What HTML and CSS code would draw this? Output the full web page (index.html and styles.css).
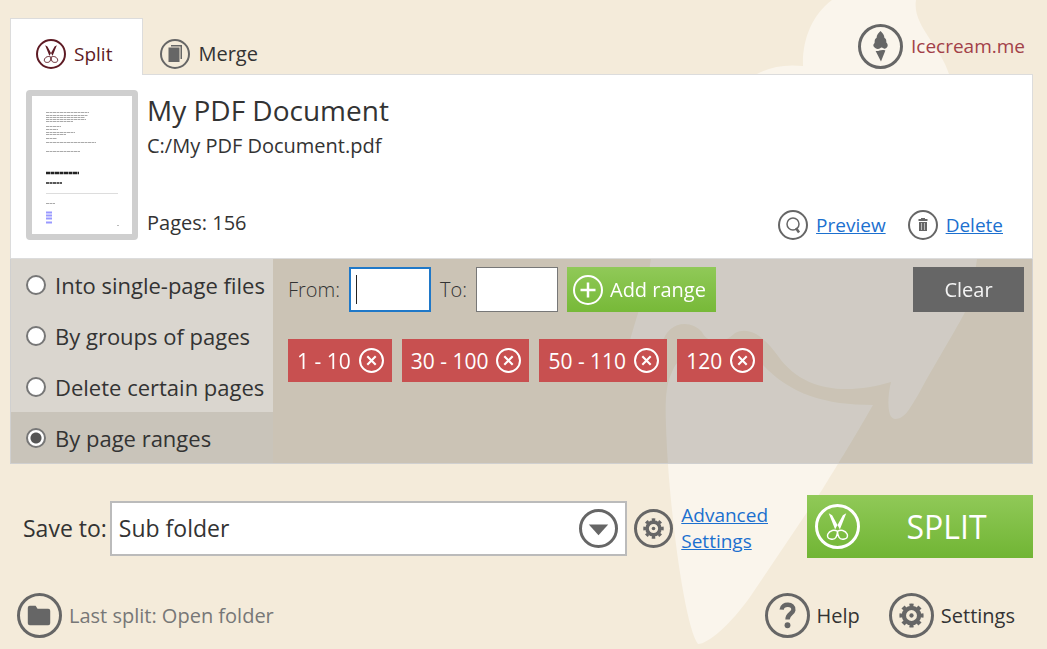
FILE: index.html
```html
<!DOCTYPE html>
<html lang="en">
<head>
    <meta charset="UTF-8">
    <meta name="viewport" content="width=device-width, initial-scale=1.0">
    <title>PDF Split &amp; Merge</title>
    <link rel="stylesheet" href="styles.css">
</head>
<body>
    <!-- shared icons -->
    <svg class="sprite" aria-hidden="true">
        <symbol id="scissors" viewBox="0 0 40 40">
            <path d="M11 6.500 L14.500 8.500 L22.500 23 L20 27 L17.800 23.500 Z M29 6.500 L25.500 8.500 L17.500 23 L20 27 L22.200 23.500 Z" fill="currentColor"/>
            <path d="M20 25 C17 23 12 23.500 10 28 C8 34 17 34 18.500 31 C19.500 29 20 27 20 25 C23 23 28 23.500 30 28 C32 34 23 34 21.500 31 C20.500 29 20 27 20 25 Z" fill="none" stroke="currentColor" stroke-width="1.500"/>
        </symbol>
        <symbol id="gear" viewBox="0 0 40 40">
            <circle cx="20" cy="20" r="7.800" fill="none" stroke="currentColor" stroke-width="4.400"/>
            <circle cx="20" cy="20" r="10.800" fill="none" stroke="currentColor" stroke-width="3.200" pathLength="16" stroke-dasharray="1 1" stroke-dashoffset="0.500"/>
            <circle cx="20" cy="20" r="2.200" fill="currentColor"/>
        </symbol>
        <symbol id="cross" viewBox="0 0 20 20">
            <path d="M6 6 L14 14 M14 6 L6 14" stroke="currentColor" stroke-width="2"/>
        </symbol>
    </svg>

    <!-- ice cream silhouette behind the window -->
    <svg class="cone" viewBox="620 0 427 649" aria-hidden="true">
        <path d="M832 0 C812 15 802 40 803 66 C785 64 770 67 757 74 C690 120 655 200 651 258 C648 285 637 315 630 340 C632 362 655 372 662 345 C666 322 690 318 702 332 C706 342 722 346 735 333 C752 325 767 341 778 356 C805 394 850 394 891 382 C887 398 887 419 895 419 C905 419 910 408 918 395 C940 355 957 328 965 312 C990 235 985 140 949 74 C940 45 912 25 916 0 Z"/>
        <path d="M672 372 C682 345 735 328 752 352 C782 392 820 405 873 405 C850 445 836 467 822 490 L750 597 C730 625 708 644 698 644 C684 625 668 500 666 425 C665 400 666 384 672 372 Z"/>
    </svg>

    <div class="window">
        <header class="header">
            <nav class="tabs">
                <a href="#" class="tab tab_active">
                    <span class="circle circle_s"><svg><use href="#scissors"/></svg></span>
                    Split
                </a>
                <a href="#" class="tab">
                    <span class="circle circle_s gray">
                        <svg viewBox="0 0 26 26"><path d="M9 4 H20 V18 H18.500 V5.500 H9 Z M6.500 6.500 H17.500 V21 H6.500 Z" fill="currentColor"/></svg>
                    </span>
                    Merge
                </a>
            </nav>
            <a href="#" class="site">
                <span class="circle circle_l gray">
                    <svg viewBox="0 0 40 40"><path d="M20 4 C22 6 24 8 24 11 C26 12 26 14 26 16 C28 18 28 21 25 22 C23 23 22 20 20 21.500 C18 23 15 23 13 20 C12 18 14 17 14 16 C14 14 14 12 16 11 C16 8 18 6 20 4 Z M15 24.500 C18 25.500 20 22.500 25 24 L20.500 35.500 Z" fill="currentColor"/></svg>
                </span>
                Icecream.me
            </a>
        </header>

        <section class="document">
            <svg class="thumb" viewBox="0 0 100 138" role="img" aria-label="First page">
                <g stroke="#aaa" stroke-width="1" stroke-dasharray="3 .5">
                    <path d="M14 16.500 H57 M14 19.500 H56 M14 21.500 H53 M14 23.500 H54 M14 25.500 H41 M14 30.500 H29 M14 33.500 H26 M14 36.500 H43 M14 38.500 H34 M14 42.500 H25 M14 46.500 H64 M14 55.500 H48"/>
                    <path d="M14 107.500 H23"/>
                </g>
                <path d="M14 77 H47" stroke="#222" stroke-width="2.500" stroke-dasharray="4 .5"/>
                <path d="M14 87 H30" stroke="#222" stroke-width="1.500" stroke-dasharray="3 .5"/>
                <path d="M14 97.500 H86" stroke="#ddd"/>
                <path d="M14 116.500 H20 M14 119.500 H20 M14 122.500 H20 M14 126.500 H20" stroke="#99f" stroke-width="2"/>
                <path d="M85 129.500 H87" stroke="#bbb"/>
            </svg>
            <div class="info">
                <h1 class="title">My PDF Document</h1>
                <p class="path">C:/My PDF Document.pdf</p>
                <p class="pages">Pages: 156</p>
            </div>
            <div class="actions">
                <a href="#" class="action">
                    <span class="circle circle_s gray">
                        <svg viewBox="0 0 26 26"><circle cx="13" cy="12" r="6" fill="none" stroke="currentColor" stroke-width="1.500"/><path d="M16 16 L19 20.500" stroke="currentColor" stroke-width="2.500"/></svg>
                    </span>
                    <span class="link">Preview</span>
                </a>
                <a href="#" class="action">
                    <span class="circle circle_s gray">
                        <svg viewBox="0 0 26 26"><path d="M8.500 7 H11 V6 H15 V7 H17.500 V9 H8.500 Z M9 10 H17 V19 H9 Z" fill="currentColor"/><path d="M11.500 11 V18 M14.500 11 V18" stroke="#bbb"/></svg>
                    </span>
                    <span class="link">Delete</span>
                </a>
            </div>
        </section>

        <section class="options">
            <div class="modes">
                <label class="mode"><input type="radio" name="mode">Into single-page files</label>
                <label class="mode"><input type="radio" name="mode">By groups of pages</label>
                <label class="mode"><input type="radio" name="mode">Delete certain pages</label>
                <label class="mode mode_active"><input type="radio" name="mode" checked>By page ranges</label>
            </div>
            <div class="ranges">
                <div class="range_form">
                    <label for="from">From:</label>
                    <input type="text" id="from" class="page_input" placeholder=" " autofocus>
                    <label for="to">To:</label>
                    <input type="text" id="to" class="page_input" placeholder=" ">
                    <button type="button" class="add">
                        <span class="circle circle_s"><svg viewBox="0 0 26 26"><path d="M13 5.500 V20.500 M5.500 13 H20.500" stroke="currentColor" stroke-width="2.500"/></svg></span>
                        Add range
                    </button>
                    <button type="button" class="clear">Clear</button>
                </div>
                <ul class="chips">
                    <li class="chip">1 - 10 <button type="button" class="circle remove" aria-label="Remove 1 - 10"><svg><use href="#cross"/></svg></button></li>
                    <li class="chip">30 - 100 <button type="button" class="circle remove" aria-label="Remove 30 - 100"><svg><use href="#cross"/></svg></button></li>
                    <li class="chip">50 - 110 <button type="button" class="circle remove" aria-label="Remove 50 - 110"><svg><use href="#cross"/></svg></button></li>
                    <li class="chip">120 <button type="button" class="circle remove" aria-label="Remove 120"><svg><use href="#cross"/></svg></button></li>
                </ul>
            </div>
        </section>

        <section class="save">
            <label for="folder" class="save_label">Save to:</label>
            <div class="select">
                <select id="folder">
                    <option>Sub folder</option>
                </select>
                <span class="circle circle_m gray arrow"><svg viewBox="0 0 34 34"><path d="M7 13 H27 L17 24 Z" fill="currentColor"/></svg></span>
            </div>
            <a href="#" class="advanced">
                <span class="circle circle_m gray"><svg><use href="#gear"/></svg></span>
                <span class="link">Advanced<br>Settings</span>
            </a>
            <button type="button" class="split">
                <span class="circle circle_l"><svg><use href="#scissors"/></svg></span>
                <span class="split_text">SPLIT</span>
            </button>
        </section>

        <footer class="footer">
            <a href="#" class="foot_link last">
                <span class="circle circle_l gray"><svg viewBox="0 0 40 40"><path d="M8 12 Q8 10 10 10 H16 L18 13 H29 Q31 13 31 15 V28 Q31 30 29 30 H10 Q8 30 8 28 Z" fill="currentColor"/></svg></span>
                Last split: Open folder
            </a>
            <a href="#" class="foot_link">
                <span class="circle circle_l gray"><svg viewBox="0 0 40 40"><path d="M14 14 C14.500 7 27 7.500 26 14.500 C25.500 18 20 18.500 20 24" fill="none" stroke="currentColor" stroke-width="4.500"/><circle cx="20" cy="30" r="3" fill="currentColor"/></svg></span>
                Help
            </a>
            <a href="#" class="foot_link">
                <span class="circle circle_l gray"><svg><use href="#gear"/></svg></span>
                Settings
            </a>
        </footer>
    </div>
</body>
</html>
```
FILE: styles.css
```css
*{box-sizing:border-box;}
body{margin:0; background:#f4ebda; color:#333; font-family:"Open Sans", "Noto Sans", sans-serif; font-size:20px; line-height:28px;}
h1, p, ul{margin:0; padding:0;}
ul{list-style:none;}
a{color:inherit; text-decoration:none;}
button, input, select{font:inherit; color:inherit; border:0; border-radius:0; padding:0; margin:0;}
.sprite{display:none;}
.cone{position:absolute; top:0; right:0; z-index:-1; width:427px; height:649px; fill:#faf5ec;}
.window{padding:18px 14px 0 10px;}

/* round icons */
.circle{display:inline-flex; flex:none; border:2px solid currentColor; border-radius:50%; background:none;}
.circle svg{display:block; width:100%; height:100%;}
.circle_s{width:30px; height:30px;}
.circle_m{width:39px; height:39px; border-width:3px;}
.circle_l{width:45px; height:45px; border-width:3px;}
.gray{color:#666;}
.link{color:#1c70cf; text-decoration:underline; font-size:19px;}

/* header */
.header{display:flex; justify-content:space-between;}
.tabs{display:flex;}
.tab{display:flex; align-items:center; gap:8px; height:57px; padding:13px 17px 0 16px; border:1px solid transparent; border-bottom:0; margin-bottom:-1px;}
.tab_active{position:relative; padding:13px 30px 0 25px; background:#fff; border-color:#dcdcdc; font-size:19px; color:#5e1b24;}
.site{display:flex; align-items:center; gap:8px; padding-right:8px; font-size:19px; color:#a24048;}

/* document card */
.document{display:flex; background:#fff; border:1px solid #dcdcdc; padding:15px 29px 18px 15px;}
.thumb{flex:none; width:112px; height:150px; border:6px solid #cfcfcf; border-radius:4px;}
.info{flex:1; display:flex; flex-direction:column; padding-left:9px;}
.title{font-size:28px; font-weight:400; line-height:40px;}
.path{line-height:32px;}
.pages{margin-top:auto; line-height:34px;}
.actions{display:flex; align-items:flex-end; gap:22px;}
.action{display:flex; align-items:center; gap:8px;}

/* split options */
.options{display:flex; background:rgba(0,0,0,0.17); border:1px solid #d0d0d0; border-top:0;}
.modes{flex:none; width:262px; background:#dad6cf; font-size:22px;}
.mode{display:flex; align-items:center; gap:9px; height:51px; padding-left:15px; white-space:nowrap;}
.mode_active{background:#c9c4ba;}
.mode input{appearance:none; flex:none; width:20px; height:20px; border:2px solid #777; border-radius:50%; background:#fff;}
.mode input:checked{background:radial-gradient(circle, #555 5px, #fff 6px);}
.ranges{flex:1; padding:8px 8px 0 15px;}
.range_form{display:flex; align-items:center; gap:9px; font-weight:300;}
.page_input{width:82px; height:45px; padding:0 5px; border:1px solid #777; background:#fff; font-size:26px; font-weight:400;}
.page_input:focus{border:2px solid #1f78c8; outline:none;}
/* steady caret while the field is empty */
.page_input:focus:placeholder-shown{background:linear-gradient(#222, #222) 5px center / 1px 29px no-repeat #fff; caret-color:transparent;}
.add{display:flex; align-items:center; gap:7px; height:45px; padding:0 10px 0 6px; background:linear-gradient(#90c958, #77b938); color:#fff; font-weight:400;}
.clear{width:111px; height:45px; margin-left:auto; background:#666; color:#f4f4f4; font-weight:400;}
.chips{display:flex; gap:10px; margin-top:27px;}
.chip{display:flex; align-items:center; gap:8px; height:43px; padding:0 8px 0 9px; background:#c85050; color:#fff; font-size:21px;}
.remove{width:25px; height:25px;}

/* save row */
.save{display:flex; align-items:center; margin-top:31px;}
.save_label{padding:2px 3px 0 13px; font-size:23px;}
.select{position:relative; flex:1; margin-top:3px;}
.select select{display:block; appearance:none; width:100%; height:55px; padding:0 7px; border:2px solid #bbb; background:#fff; font-size:23px;}
.arrow{position:absolute; right:9px; top:8px; pointer-events:none;}
.advanced{display:flex; align-items:center; gap:8px; padding:3px 39px 0 7px;}
.advanced .link{line-height:26px;}
.split{display:flex; align-items:center; width:226px; height:63px; padding:0 8px; background:linear-gradient(#90c958, #71b534); color:#fff; font-size:32px;}
.split_text{flex:1; padding-left:8px; text-align:center;}

/* footer */
.footer{display:flex; align-items:center; gap:29px; margin-top:35px; padding:0 18px 0 7px;}
.foot_link{display:flex; align-items:center; gap:7px;}
.last{margin-right:auto; color:#777;}
```
